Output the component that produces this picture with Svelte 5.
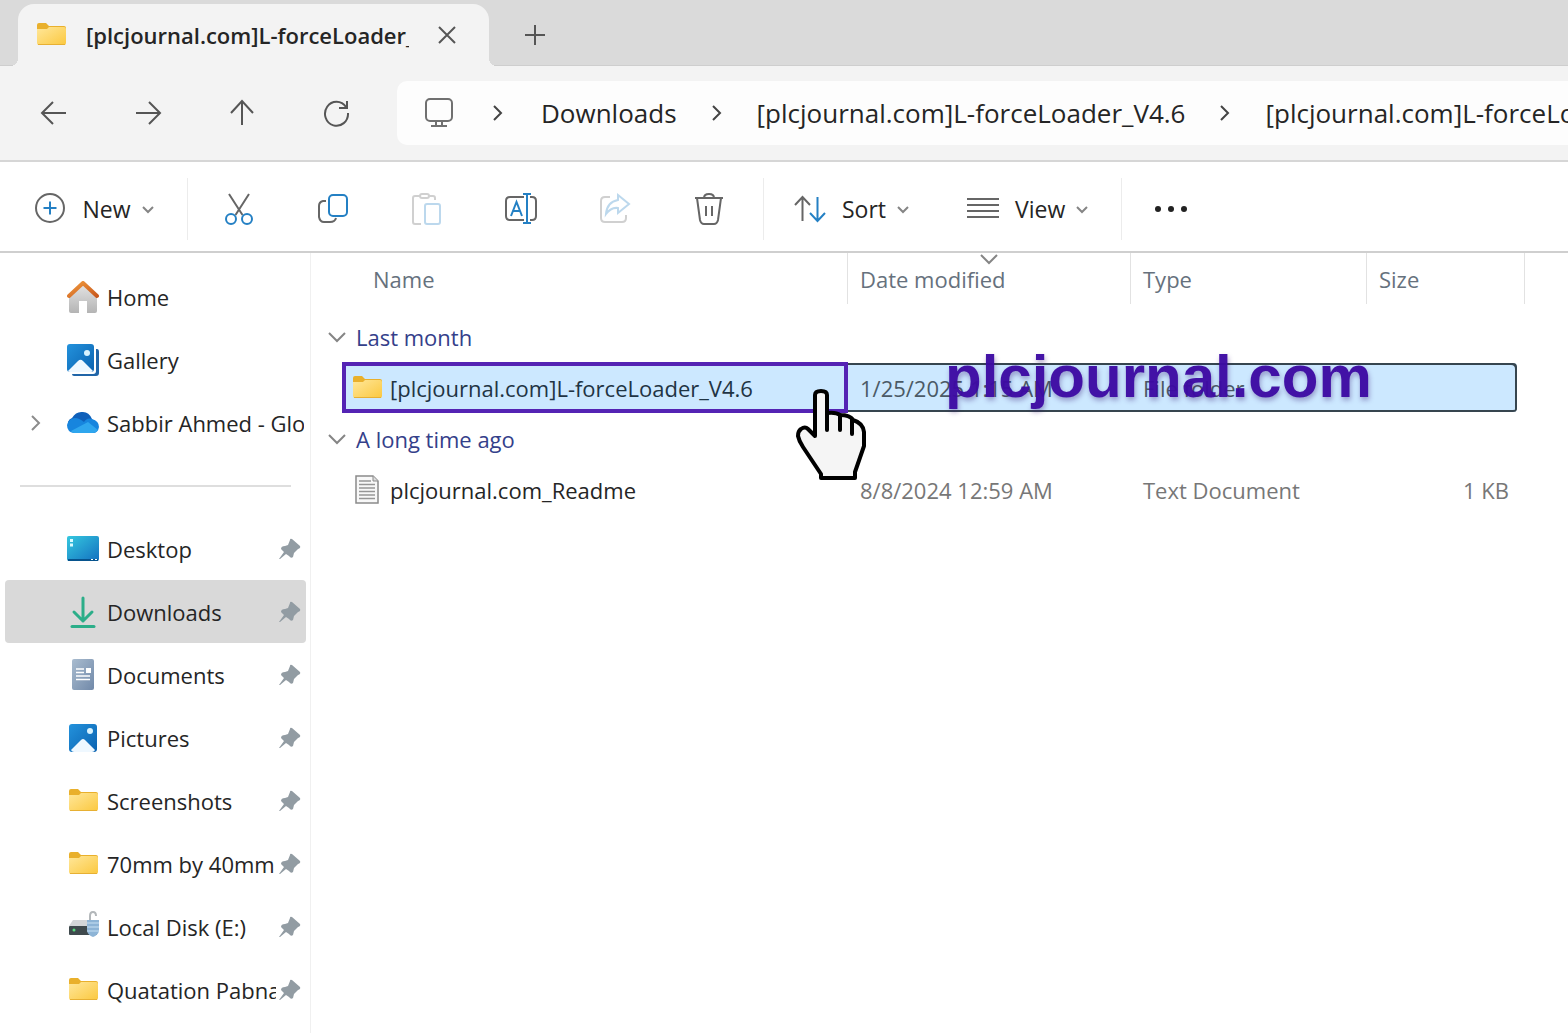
<script lang="ts">
    let selected = $state('folder');
    let openRecent = $state(true);
    let openOld = $state(true);

    const tools = ['cut', 'copy', 'paste', 'rename', 'share', 'delete'];
    const crumbs = ['Downloads', '[plcjournal.com]L-forceLoader_V4.6', '[plcjournal.com]L-forceLoader_V4.6'];

    const places = [
        { icon: 'home', label: 'Home' },
        { icon: 'gallery', label: 'Gallery' },
        { icon: 'cloud', label: 'Sabbir Ahmed - Global', expands: true },
    ];

    const pinned = [
        { icon: 'desktop', label: 'Desktop' },
        { icon: 'download', label: 'Downloads', current: true },
        { icon: 'document', label: 'Documents' },
        { icon: 'picture', label: 'Pictures' },
        { icon: 'folder', label: 'Screenshots' },
        { icon: 'folder', label: '70mm by 40mm' },
        { icon: 'disk', label: 'Local Disk (E:)' },
        { icon: 'folder', label: 'Quatation Pabna' },
    ];
</script>

<svelte:head>
    <title>File Explorer</title>
</svelte:head>

<!-- shared gradients -->
<svg class="defs" width="0" height="0" aria-hidden="true">
    <defs>
        <linearGradient id="g-folder" x1="0" y1="0" x2="1" y2="1">
            <stop offset="0" stop-color="#ffe79a" />
            <stop offset="1" stop-color="#fbc83f" />
        </linearGradient>
        <linearGradient id="g-roof" x1="0" y1="0" x2="1" y2="1">
            <stop offset="0" stop-color="#f09a3e" />
            <stop offset="1" stop-color="#c9591d" />
        </linearGradient>
        <linearGradient id="g-wall" x1="0" y1="0" x2="0" y2="1">
            <stop offset="0" stop-color="#e2e2e2" />
            <stop offset="1" stop-color="#b4b4b4" />
        </linearGradient>
        <linearGradient id="g-blue" x1="0" y1="0" x2="1" y2="1">
            <stop offset="0" stop-color="#2392dc" />
            <stop offset="1" stop-color="#0b62b0" />
        </linearGradient>
        <linearGradient id="g-desk" x1="0" y1="0" x2="1" y2="1">
            <stop offset="0" stop-color="#35c8df" />
            <stop offset="1" stop-color="#1370c0" />
        </linearGradient>
        <linearGradient id="g-doc" x1="0" y1="0" x2="1" y2="1">
            <stop offset="0" stop-color="#a9bccf" />
            <stop offset="1" stop-color="#7189a9" />
        </linearGradient>
    </defs>
</svg>

{#snippet chevron(dir: string)}
    <svg class="chevron {dir}" viewBox="0 0 18 18" width="18" height="18" aria-hidden="true">
        {#if dir === 'right'}
            <path d="M5 2 L12 9 L5 16" />
        {:else if dir === 'small'}
            <path d="M4 7 L9 12 L14 7" />
        {:else}
            <path d="M1 5 L9 13 L17 5" />
        {/if}
    </svg>
{/snippet}

{#snippet icon(name: string)}
    <svg class="icon" viewBox="0 0 32 32" width="32" height="32" aria-hidden="true">
        {#if name === 'folder'}
            <path d="M2 6 Q2 4 4 4 H11 L14 7 H29 Q31 7 31 9 V12 H2 Z" fill="#e9b02c" />
            <path d="M2 10 H12 L14 8 H29 Q31 8 31 10 V24 Q31 26 29 26 H4 Q2 26 2 24 Z" fill="url(#g-folder)" />
            <path d="M3 25.5 H30" stroke="#e7b033" />
        {:else if name === 'home'}
            <path d="M2 16 L16 4 L30 16 V30 Q30 32 28 32 H20 V20 H12 V32 H4 Q2 32 2 30 Z" fill="url(#g-wall)" />
            <path d="M2 15 L16 2 L30 15" fill="none" stroke="url(#g-roof)" stroke-width="4" stroke-linecap="round" stroke-linejoin="round" />
        {:else if name === 'gallery'}
            <path d="M5 5 H30 Q32 5 32 8 V29 Q32 32 29 32 H7 Q5 32 5 30 Z" fill="#2065a8" />
            <rect x="0" y="0" width="29" height="30" rx="3" fill="#fff" />
            <rect x="0" y="0" width="27" height="28" rx="3" fill="url(#g-blue)" />
            <path d="M1 27 L11 17 Q13.500 14.500 16 17 L26 27 Q25 28 24 28 H3 Q1 28 1 27 Z" fill="#eff8ff" />
            <circle cx="20" cy="9" r="3" fill="#d8f3ff" />
        {:else if name === 'cloud'}
            <path d="M5 11 Q9 4 16 5 Q22 5 25 12 L28 17 L5 23 Q0 19 1 15 Q2 12 5 11 Z" fill="#0f60ba" />
            <path d="M17 15 Q20 10 25 12 Q32 14 32 20 Q31 26 26 26 H7 Q0 25 0 18 Q2 11 8 11 Q12 11 17 15 Z" fill="#1785de" />
            <path d="M4 24 L21 15 L31 23 Q29 26 26 26 H7 Q5 26 4 24 Z" fill="#2fa6ee" />
        {:else if name === 'desktop'}
            <rect x="0" y="3" width="32" height="25" rx="2" fill="url(#g-desk)" />
            <path d="M3 7.500 h3 M3 12 h3" stroke="#d9fbff" stroke-width="3" />
            <path d="M1 27 H31" stroke="#07538d" stroke-width="2" />
            <path d="M24 26.500 h2 M28 26.500 h2" stroke="#fff" />
        {:else if name === 'download'}
            <path d="M16 2 V25 M7 16 L16 25 L25 16" fill="none" stroke="#2cae89" stroke-width="3" stroke-linejoin="round" stroke-linecap="round" />
            <path d="M5 30.500 H27" stroke="#2cae89" stroke-width="3" stroke-linecap="round" />
        {:else if name === 'document'}
            <rect x="5" y="0" width="22" height="31" rx="2" fill="url(#g-doc)" />
            <path d="M9 10 H17 M9 13.500 H17 M9 17 H23 M9 20.500 H23" stroke="#fff" stroke-width="1.500" />
            <rect x="19" y="9" width="5" height="5" fill="#fff" />
        {:else if name === 'picture'}
            <rect x="2" y="2" width="28" height="28" rx="3" fill="url(#g-blue)" />
            <path d="M4 28 L14 18 Q16 16 18 18 L28 28 Q27 30 25 30 H7 Q5 30 4 28 Z" fill="#eff8ff" />
            <circle cx="23" cy="9" r="3" fill="#d8f3ff" />
        {:else if name === 'disk'}
            <path d="M6 9 H27 L30 15 H2 Z" fill="#d3d6d8" />
            <rect x="2" y="15" width="28" height="9" rx="1" fill="#3f4a4d" />
            <circle cx="7" cy="19" r="1.500" fill="#58d97e" />
            <path d="M23 9 V5 Q23 1 26 1 Q29 1 29 5" fill="none" stroke="#b3b7ba" stroke-width="2" />
            <path d="M20 9 H32 V20 Q31 24 26 26 Q21 24 20 20 Z" fill="#8db4d6" />
            <path d="M20 12 H32 M20 16 H32 M20 20 H32" stroke="#c7e0f3" />
        {:else if name === 'text'}
            <path d="M5 2 H22 L27 7 V29 H5 Z" fill="#f8f8f8" stroke="#8b8b8b" stroke-width="1.500" />
            <path d="M22 2 V7 H27" fill="#ddd" stroke="#8b8b8b" />
            <path d="M8 7 H20 M8 10.500 H24 M8 14 H24 M8 17.500 H24 M8 21 H24 M8 24.500 H24" stroke="#969696" stroke-width="1.500" />
        {/if}
    </svg>
{/snippet}

{#snippet tool(name: string)}
    <svg class="line-icon" viewBox="0 0 34 34" width="34" height="34" aria-hidden="true">
        {#if name === 'new'}
            <circle cx="17" cy="16" r="14" />
            <path class="accent" d="M17 9.500 V22.500 M10.500 16 H23.500" />
        {:else if name === 'cut'}
            <path d="M7 2 L20.500 23 M27 2 L13.500 23" />
            <circle class="accent" cx="9" cy="27" r="5" />
            <circle class="accent" cx="25" cy="27" r="5" />
        {:else if name === 'copy'}
            <path d="M10 9 H7 Q3 10 3 14 V25 Q4 30 8 30 H14 Q19 30 20 26" />
            <rect class="accent" x="13" y="3" width="18" height="21" rx="4" />
        {:else if name === 'paste'}
            <path d="M10 4 H5 Q3 4 3 6 V30 Q3 32 5 32 H11 M18 4 H23 Q25 4 25 6 V8" />
            <rect x="10" y="2" width="9" height="4" rx="2" />
            <rect class="accent" x="15" y="12" width="15" height="20" rx="2" />
        {:else if name === 'rename'}
            <path d="M20 5 H6 Q2 5 2 9 V24 Q2 28 6 28 H20 M26 5 H28 Q32 5 32 9 V24 Q32 28 28 28 H26" />
            <path class="accent" d="M7 24 L12.500 10 L18 24 M9 19 H16 M19 2 H27 M19 31 H27 M23 2 V31" />
        {:else if name === 'share'}
            <path d="M12 5 H7 Q3 5 3 9 V26 Q3 30 7 30 H24 Q28 30 28 26 V23" />
            <path class="accent" d="M20 3 L31 12 L20 21 V16 Q13 15 8 22 Q9 10 20 8 Z" />
        {:else if name === 'delete'}
            <path d="M3 6 H31 M12 6 Q12 2 17 2 Q22 2 22 6 M5 6 L8 28 Q9 32 12 32 H22 Q25 32 26 28 L29 6 M14 14 V24 M20 14 V24" />
        {:else if name === 'sort'}
            <path d="M9.500 29 V5 M2 13 L9.500 5 L17 13" />
            <path class="accent" d="M24.500 5 V29 M17 21 L24.500 29 L32 21" />
        {:else if name === 'view'}
            <path d="M1 7 H33 M1 13 H33 M1 19 H33 M1 25 H33" />
        {/if}
    </svg>
{/snippet}

{#snippet place(item: any, pin: boolean)}
    <li>
        <a href="#{item.label}" class:current={item.current}>
            <span class="slot">
                {#if item.expands}{@render chevron('right')}{/if}
            </span>
            {@render icon(item.icon)}
            <span class="place-name">{item.label}</span>
            {#if pin}
                <svg class="pin" viewBox="0 0 24 24" width="24" height="24" aria-hidden="true">
                    <path d="M14 2 L22 9 Q23 11 20 12 L16 16 L15 20 Q13 22 11 19 L8 17 L2 22 L1 22 L6 15 L3 12 Q3 9 7 9 L10 8 L12 3 Q12 1 14 2 Z" />
                </svg>
            {/if}
        </a>
    </li>
{/snippet}

<div class="explorer">
    <header class="tabs">
        <div class="tab">
            {@render icon('folder')}
            <span class="tab-title">[plcjournal.com]L-forceLoader_V4.6</span>
            <button aria-label="Close tab">
                <svg class="glyph" viewBox="0 0 20 20" width="20" height="20"><path d="M2 2 L18 18 M18 2 L2 18" /></svg>
            </button>
        </div>
        <button class="add-tab" aria-label="New tab">
            <svg class="glyph" viewBox="0 0 20 20" width="20" height="20"><path d="M10 0 V20 M0 10 H20" /></svg>
        </button>
    </header>

    <nav class="navigation" aria-label="Address">
        <button aria-label="Back">
            <svg class="glyph" viewBox="0 0 28 28" width="28" height="28"><path d="M26 14 H3 M13 3 L2 14 L13 25" /></svg>
        </button>
        <button aria-label="Forward">
            <svg class="glyph" viewBox="0 0 28 28" width="28" height="28"><path d="M2 14 H25 M15 3 L26 14 L15 25" /></svg>
        </button>
        <button aria-label="Up">
            <svg class="glyph" viewBox="0 0 28 28" width="28" height="28"><path d="M14 26 V3 M3 14 L14 2 L25 14" /></svg>
        </button>
        <button aria-label="Refresh">
            <svg class="glyph" viewBox="0 0 28 28" width="28" height="28"><path d="M24 8 A11.500 12 0 1 0 26 14 M25 2 V9 H17" /></svg>
        </button>
        <div class="address">
            <svg class="monitor" viewBox="0 0 32 32" width="32" height="32" aria-hidden="true">
                <rect x="3" y="2" width="26" height="22" rx="4" />
                <path d="M13 24 V29 M19 24 V29 M8 29 H24" />
            </svg>
            {#each crumbs as crumb}
                {@render chevron('right')}
                <a href="#path">{crumb}</a>
            {/each}
        </div>
    </nav>

    <div class="toolbar">
        <button class="labelled new">{@render tool('new')}<span>New</span>{@render chevron('small')}</button>
        <div class="tools">
            {#each tools as name}
                <button aria-label={name} disabled={name === 'paste' || name === 'share'}>{@render tool(name)}</button>
            {/each}
        </div>
        <div class="arrange">
            <button class="labelled">{@render tool('sort')}<span>Sort</span>{@render chevron('small')}</button>
            <button class="labelled">{@render tool('view')}<span>View</span>{@render chevron('small')}</button>
        </div>
        <button class="more" aria-label="See more">
            <svg viewBox="0 0 34 8" width="34" height="8">
                <circle cx="4" cy="4" r="3" /><circle cx="17" cy="4" r="3" /><circle cx="30" cy="4" r="3" />
            </svg>
        </button>
    </div>

    <div class="content">
        <aside>
            <ul>
                {#each places as item}
                    {@render place(item, false)}
                {/each}
            </ul>
            <hr />
            <ul>
                {#each pinned as item}
                    {@render place(item, true)}
                {/each}
            </ul>
        </aside>

        <main>
            <table>
                <colgroup>
                    <col class="c-gutter" /><col class="c-name" /><col class="c-date" /><col class="c-type" /><col class="c-size" /><col class="c-end" />
                </colgroup>
                <thead>
                    <tr>
                        <td></td>
                        <th class="name">Name</th>
                        <th class="sorted">Date modified {@render chevron('down')}</th>
                        <th>Type</th>
                        <th colspan="2">Size</th>
                    </tr>
                </thead>
                <tbody>
                    <tr>
                        <td colspan="6" class="group">
                            <button onclick={() => openRecent = !openRecent}>{@render chevron('down')}Last month</button>
                        </td>
                    </tr>
                    {#if openRecent}
                        <tr class="file" class:selected={selected === 'folder'} onclick={() => selected = 'folder'}>
                            <td></td>
                            <td class="cell name"><div>{@render icon('folder')}[plcjournal.com]L-forceLoader_V4.6</div></td>
                            <td class="cell">1/25/2025 1:15 AM</td>
                            <td class="cell">File folder</td>
                            <td class="cell size"></td>
                            <td></td>
                        </tr>
                    {/if}
                    <tr>
                        <td colspan="6" class="group">
                            <button onclick={() => openOld = !openOld}>{@render chevron('down')}A long time ago</button>
                        </td>
                    </tr>
                    {#if openOld}
                        <tr class="file" class:selected={selected === 'readme'} onclick={() => selected = 'readme'}>
                            <td></td>
                            <td class="cell name"><div>{@render icon('text')}plcjournal.com_Readme</div></td>
                            <td class="cell">8/8/2024 12:59 AM</td>
                            <td class="cell">Text Document</td>
                            <td class="cell size">1 KB</td>
                            <td></td>
                        </tr>
                    {/if}
                </tbody>
            </table>

            <div class="watermark">plcjournal.com</div>
            <svg class="hand" viewBox="0 0 70 92" width="70" height="92" aria-hidden="true">
                <path d="M19 48 L12 41 Q9 38 5 41 Q2 43 2 48 Q3 53 7 59 L25 86 V90 H59 V84 L68 58 V44 Q67 35 57 32 Q54 27 44 27 Q40 24 31 25 V7 Q31 3 25 3 Q19 3 19 7 Z" />
                <path d="M31 24 V42 M44 27 V42 M56 31 V46" />
            </svg>
        </main>
    </div>
</div>

<style>
    :global(body) {
        overflow: hidden;
        background: #fff;
    }

    .explorer {
        height: 100vh;
        display: flex;
        flex-direction: column;
        color: #252525;
        font-family: "Open Sans", "Noto Sans", sans-serif;
        font-size: 22px;
        line-height: 30px;
    }

    .defs {
        position: absolute;
    }

    svg {
        display: block;
        flex: none;
    }

    button {
        display: flex;
        align-items: center;
        justify-content: center;
        padding: 0;
        border: none;
        background: none;
        color: inherit;
        font: inherit;
    }

    a {
        color: inherit;
        text-decoration: none;
    }

    .chevron, .glyph, .line-icon, .monitor {
        fill: none;
        stroke: #444;
        stroke-width: 2;
    }

    .chevron.small, .chevron.down {
        stroke: #858585;
    }

    .line-icon {
        stroke: #666;
    }

    .line-icon .accent {
        stroke: #2480c4;
    }

    .glyph {
        stroke: #555;
    }

    .tabs {
        display: flex;
        flex: none;
        height: 66px;
        padding: 4px 18px 0;
        box-sizing: border-box;
        background: #dadada;
        box-shadow: inset 0 -1px #cecece;
    }

    .tab {
        position: relative;
        display: flex;
        align-items: center;
        width: 471px;
        padding: 0 32px 0 17px;
        box-sizing: border-box;
        border-radius: 16px 16px 0 0;
        background: #f3f3f3;
    }

    /* flared feet of the tab */
    .tab::before, .tab::after {
        content: "";
        position: absolute;
        bottom: 0;
        width: 8px;
        height: 8px;
    }

    .tab::before {
        right: 100%;
        background: radial-gradient(circle at 0 0, transparent 8px, #f3f3f3 8px);
    }

    .tab::after {
        left: 100%;
        background: radial-gradient(circle at 100% 0, transparent 8px, #f3f3f3 8px);
    }

    .tab-title {
        flex: 1;
        margin: 0 28px 0 19px;
        overflow: hidden;
        white-space: nowrap;
        font-weight: 600;
    }

    .add-tab {
        width: 92px;
    }

    .navigation {
        display: flex;
        flex: none;
        align-items: center;
        height: 96px;
        padding-left: 7px;
        box-sizing: border-box;
        border-bottom: 2px solid #d6d6d6;
        background: #f3f3f3;
    }

    .navigation button {
        flex: none;
        width: 94px;
        height: 64px;
    }

    .address {
        display: flex;
        flex: 1;
        align-items: center;
        min-width: 0;
        height: 64px;
        margin-left: 14px;
        padding-left: 26px;
        box-sizing: border-box;
        border-radius: 10px 0 0 10px;
        background: #fdfdfd;
        overflow: hidden;
        white-space: nowrap;
        font-size: 26px;
        line-height: 36px;
    }

    .address .chevron {
        margin: 0 31px;
    }

    .address .monitor + .chevron {
        margin: 0 34px;
    }

    .monitor {
        stroke: #707070;
        stroke-width: 2;
    }

    .toolbar {
        display: flex;
        flex: none;
        align-items: center;
        height: 91px;
        padding-top: 4px;
        box-sizing: border-box;
        border-bottom: 2px solid #cfcfcf;
        background: #fff;
        font-size: 23px;
    }

    .toolbar .labelled {
        height: 62px;
    }

    .toolbar .labelled span {
        margin: 0 8px 0 15px;
    }

    .toolbar .new {
        width: 188px;
        padding-left: 3px;
        box-sizing: border-box;
        border-right: 1px solid #ececec;
    }

    .tools {
        display: flex;
        padding: 0 7px 0 4px;
        border-right: 1px solid #ececec;
    }

    .tools button {
        width: 94px;
        height: 62px;
    }

    .tools button:disabled {
        opacity: 0.3;
    }

    .arrange {
        display: flex;
        gap: 54px;
        padding: 0 30px 0 29px;
        border-right: 1px solid #ececec;
    }

    .more {
        width: 98px;
        height: 62px;
        fill: #222;
    }

    .content {
        display: flex;
        flex: 1;
        min-height: 0;
    }

    aside {
        flex: none;
        width: 311px;
        padding: 12px 4px 0 5px;
        box-sizing: border-box;
        border-right: 1px solid #f0f0f0;
        overflow: hidden;
    }

    ul {
        margin: 0;
        padding: 0;
        list-style: none;
    }

    aside a {
        display: flex;
        align-items: center;
        height: 63px;
        padding-right: 4px;
        border-radius: 4px;
    }

    aside a:not(:has(.pin)) {
        padding-right: 0;
    }

    aside a.current {
        background: #d9d9d9;
    }

    .slot {
        display: flex;
        flex: none;
        justify-content: center;
        width: 62px;
    }

    .slot .chevron {
        stroke: #8c8c8c;
    }

    .place-name {
        flex: 1;
        margin: 0 2px 0 8px;
        overflow: hidden;
        white-space: nowrap;
    }

    .pin {
        fill: #929ca3;
    }

    hr {
        margin: 31px 15px 30px;
        border: none;
        border-top: 2px solid #dedede;
    }

    main {
        position: relative;
        flex: 1;
        min-width: 0;
        overflow: hidden;
    }

    table {
        width: 1203px;
        margin-left: 11px;
        table-layout: fixed;
        border-collapse: separate;
        border-spacing: 0;
    }

    .c-gutter { width: 20px; }
    .c-name { width: 506px; }
    .c-date { width: 283px; }
    .c-type { width: 236px; }
    .c-size { width: 150px; }
    .c-end { width: 8px; }

    th, td {
        height: 51px;
        padding: 0;
        box-sizing: border-box;
        text-align: left;
        white-space: nowrap;
    }

    th {
        position: relative;
        padding-left: 12px;
        border-right: 1px solid #e2e2e2;
        color: #66717d;
        font-weight: 400;
    }

    th.name {
        padding-left: 31px;
    }

    .sorted .chevron {
        position: absolute;
        top: -3px;
        left: 50%;
        transform: translateX(-50%);
    }

    thead::after {
        content: "";
        display: block;
        height: 7px;
    }

    .group button {
        gap: 10px;
        margin-left: 6px;
        color: #34408a;
    }

    .cell {
        padding-left: 12px;
        color: #777;
    }

    .cell.name {
        padding-left: 9px;
        color: #252525;
    }

    .cell.name div {
        display: flex;
        align-items: center;
        gap: 7px;
    }

    .cell.size {
        padding: 0 8px 0 0;
        text-align: right;
    }

    .selected .cell {
        border: solid transparent;
        border-width: 1px 0;
        background: #cce8ff padding-box;
        box-shadow: inset 0 2px #36454f, inset 0 -2px #36454f;
        color: #4b5a66;
    }

    .selected .cell.name {
        padding-left: 5px;
        border: 4px solid #5423b4;
        box-shadow: none;
        color: #1f3444;
    }

    .selected .cell.size {
        border-radius: 0 4px 4px 0;
        box-shadow: inset -2px 2px #36454f, inset 0 -2px #36454f;
    }

    .watermark {
        position: absolute;
        top: 89px;
        left: 634px;
        color: #3d0aa3;
        font: bold 60px/70px "Liberation Sans", Arial, sans-serif;
        text-shadow: 1px 3px 5px rgba(60, 30, 120, 0.4);
        opacity: 0.96;
        pointer-events: none;
    }

    .hand {
        position: absolute;
        top: 135px;
        left: 485px;
        fill: #f5f5f5;
        stroke: #000;
        stroke-width: 4;
        stroke-linejoin: round;
        stroke-linecap: round;
        pointer-events: none;
    }
</style>
